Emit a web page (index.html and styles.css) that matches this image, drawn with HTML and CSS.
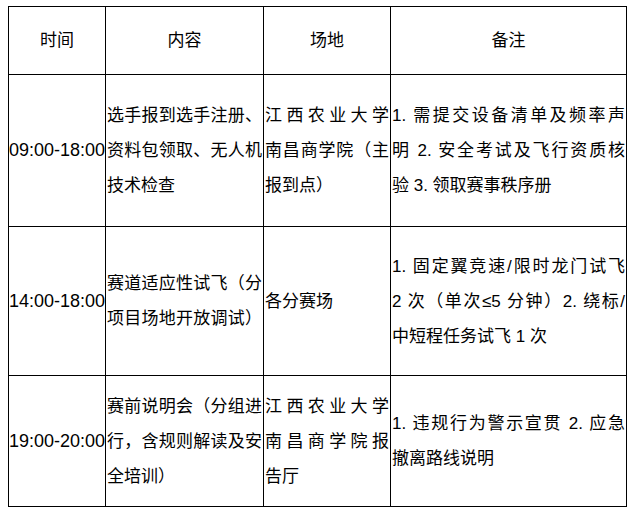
FILE: index.html
```html
<!DOCTYPE html>
<html lang="zh-CN">
<head>
<meta charset="utf-8">
<title>日程安排</title>
<link rel="stylesheet" href="styles.css">
</head>
<body>
<div class="page">
<table class="schedule">
  <colgroup>
    <col class="c-time"><col class="c-content"><col class="c-venue"><col class="c-note">
  </colgroup>
  <thead>
    <tr class="r-head">
      <th>时间</th><th>内容</th><th>场地</th><th>备注</th>
    </tr>
  </thead>
  <tbody>
    <tr class="r1">
      <td class="time">09:00-18:00</td>
      <td><span class="ln j">选手报到选手注册、</span><span class="ln j">资料包领取、无人机</span><span class="ln">技术检查</span></td>
      <td><span class="ln j">江西农业大学</span><span class="ln j">南昌商学院（主</span><span class="ln">报到点）</span></td>
      <td><span class="ln j">1. 需提交设备清单及频率声</span><span class="ln j">明 2. 安全考试及飞行资质核</span><span class="ln">验 3. 领取赛事秩序册</span></td>
    </tr>
    <tr class="r2">
      <td class="time">14:00-18:00</td>
      <td><span class="ln j">赛道适应性试飞（分</span><span class="ln j">项目场地开放调试）</span></td>
      <td><span class="ln">各分赛场</span></td>
      <td><span class="ln j">1. 固定翼竞速/限时龙门试飞</span><span class="ln j">2 次（单次≤5 分钟）2. 绕标/</span><span class="ln">中短程任务试飞 1 次</span></td>
    </tr>
    <tr class="r3">
      <td class="time">19:00-20:00</td>
      <td><span class="ln j">赛前说明会（分组进</span><span class="ln j">行，含规则解读及安</span><span class="ln">全培训）</span></td>
      <td><span class="ln j">江西农业大学</span><span class="ln j">南昌商学院报</span><span class="ln">告厅</span></td>
      <td><span class="ln j">1. 违规行为警示宣贯 2. 应急</span><span class="ln">撤离路线说明</span></td>
    </tr>
  </tbody>
</table>
</div>
</body>
</html>
```
FILE: styles.css
```css
html, body {
  margin: 0;
  padding: 0;
  background: #ffffff;
}

.page {
  padding: 6px 0 0 8px;
}

.schedule {
  border-collapse: collapse;
  table-layout: fixed;
  width: 618px;
  font-family: "Liberation Sans", "Noto Sans CJK SC", sans-serif;
  font-size: 17px;
  line-height: 35px;
  color: #000000;
}

.c-time { width: 97px; }
.c-content { width: 158px; }
.c-venue { width: 127px; }
.c-note { width: 236px; }

.schedule th,
.schedule td {
  border: 1px solid #000000;
  padding: 0 1px;
  vertical-align: middle;
  text-align: left;
  font-weight: normal;
}

.schedule th {
  text-align: center;
}

.schedule td.time {
  text-align: center;
  padding: 0;
  white-space: nowrap;
  font-size: 18px;
}

.r-head { height: 68px; }
.r1 { height: 152px; }
.r2 { height: 149px; }
.r3 { height: 131px; }

.ln {
  display: block;
  white-space: nowrap;
}

.ln.j {
  text-align: justify;
  text-align-last: justify;
}
```
